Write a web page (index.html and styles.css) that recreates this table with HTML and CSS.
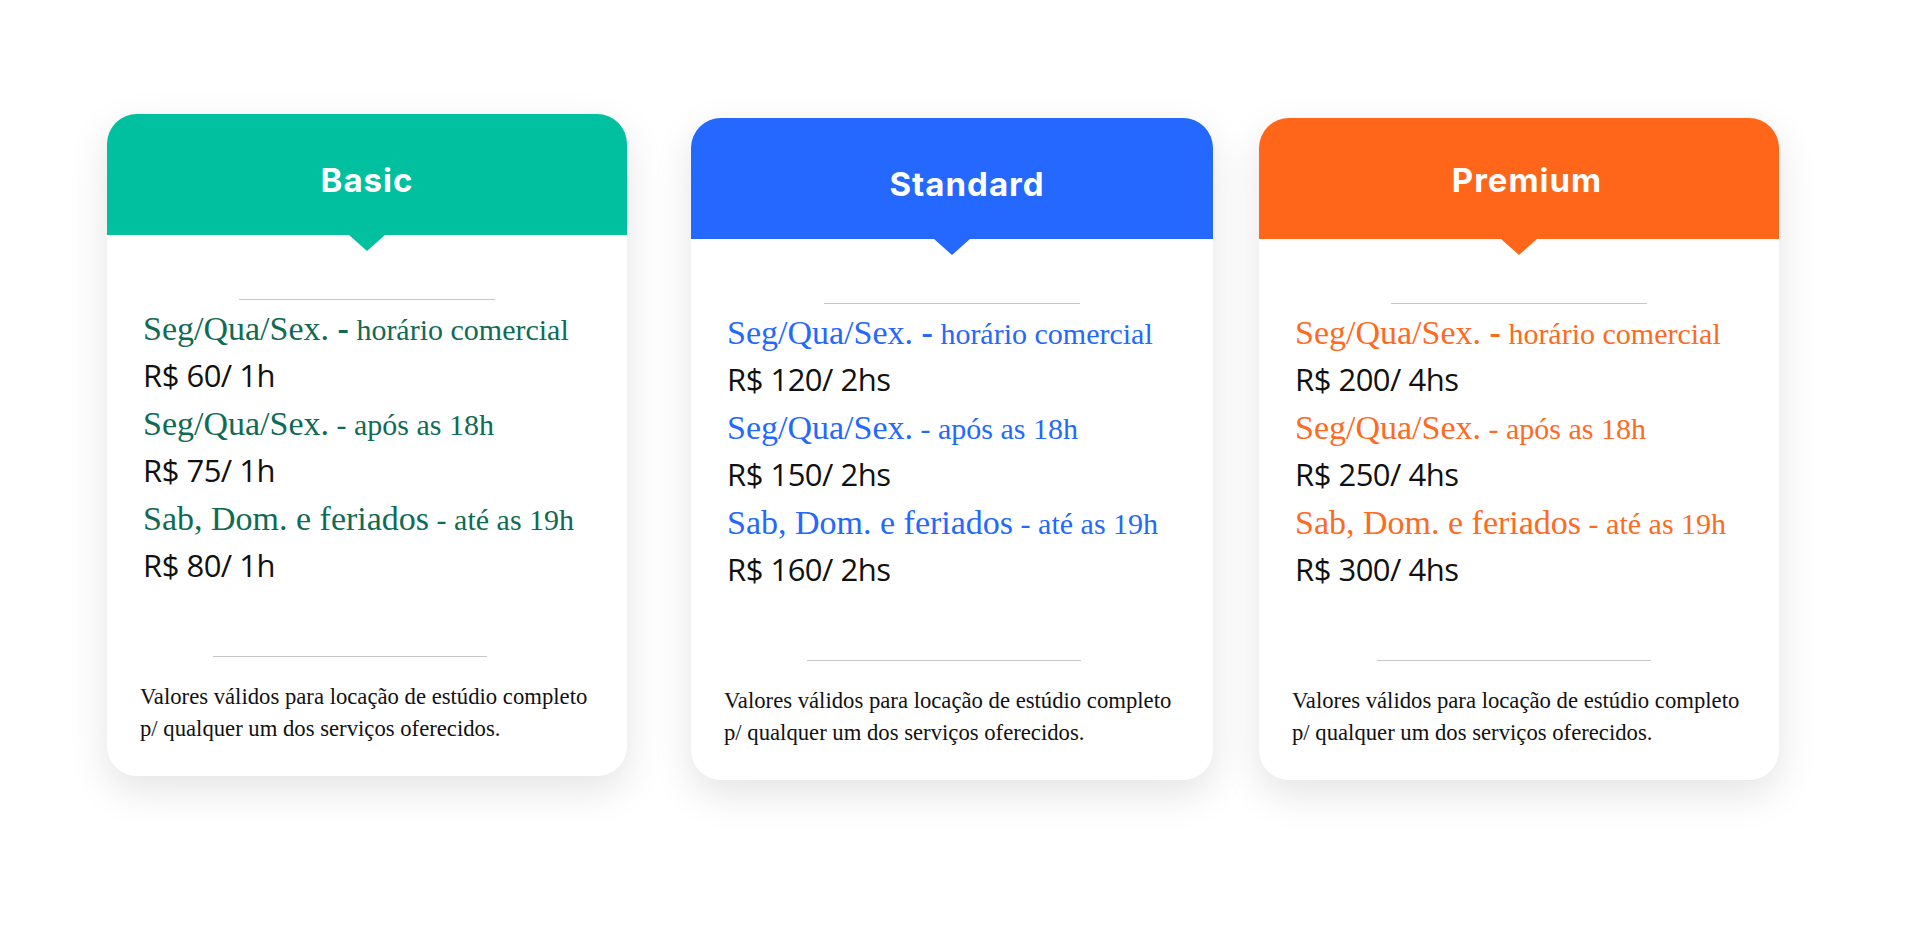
FILE: index.html
```html
<!DOCTYPE html>
<html lang="pt-BR">
<head>
<meta charset="utf-8">
<title>Planos de locação</title>
<link rel="stylesheet" href="styles.css">
</head>
<body>
<main class="pricing">
  <article class="card card--basic">
    <header class="card__head"><h2 class="card__title">Basic</h2></header>
    <div class="card__body">
      <hr class="rule rule--top">
      <ul class="rates">
        <li class="rates__when">Seg/Qua/Sex. <b class="rates__dash">-</b><span class="rates__time"> horário comercial</span></li>
        <li class="rates__price">R$ 60/ 1h</li>
        <li class="rates__when">Seg/Qua/Sex.<span class="rates__time"> - após as 18h</span></li>
        <li class="rates__price">R$ 75/ 1h</li>
        <li class="rates__when">Sab, Dom. e feriados<span class="rates__time"> - até as 19h</span></li>
        <li class="rates__price">R$ 80/ 1h</li>
      </ul>
      <hr class="rule rule--bottom">
      <p class="card__note">Valores válidos para locação de estúdio completo<br>p/ qualquer um dos serviços oferecidos.</p>
    </div>
  </article>

  <article class="card card--standard">
    <header class="card__head"><h2 class="card__title">Standard</h2></header>
    <div class="card__body">
      <hr class="rule rule--top">
      <ul class="rates">
        <li class="rates__when">Seg/Qua/Sex. <b class="rates__dash">-</b><span class="rates__time"> horário comercial</span></li>
        <li class="rates__price">R$ 120/ 2hs</li>
        <li class="rates__when">Seg/Qua/Sex.<span class="rates__time"> - após as 18h</span></li>
        <li class="rates__price">R$ 150/ 2hs</li>
        <li class="rates__when">Sab, Dom. e feriados<span class="rates__time"> - até as 19h</span></li>
        <li class="rates__price">R$ 160/ 2hs</li>
      </ul>
      <hr class="rule rule--bottom">
      <p class="card__note">Valores válidos para locação de estúdio completo<br>p/ qualquer um dos serviços oferecidos.</p>
    </div>
  </article>

  <article class="card card--premium">
    <header class="card__head"><h2 class="card__title">Premium</h2></header>
    <div class="card__body">
      <hr class="rule rule--top">
      <ul class="rates">
        <li class="rates__when">Seg/Qua/Sex. <b class="rates__dash">-</b><span class="rates__time"> horário comercial</span></li>
        <li class="rates__price">R$ 200/ 4hs</li>
        <li class="rates__when">Seg/Qua/Sex.<span class="rates__time"> - após as 18h</span></li>
        <li class="rates__price">R$ 250/ 4hs</li>
        <li class="rates__when">Sab, Dom. e feriados<span class="rates__time"> - até as 19h</span></li>
        <li class="rates__price">R$ 300/ 4hs</li>
      </ul>
      <hr class="rule rule--bottom">
      <p class="card__note">Valores válidos para locação de estúdio completo<br>p/ qualquer um dos serviços oferecidos.</p>
    </div>
  </article>
</main>
</body>
</html>
```

FILE: styles.css
```css
* {
  box-sizing: border-box;
}

html,
body {
  margin: 0;
  background: #ffffff;
}

.pricing {
  display: flex;
  align-items: flex-start;
  min-height: 950px;
  padding: 114px 0 120px 107px;
}

.card {
  width: 520px;
  height: 662px;
  background: #ffffff;
  border-radius: 30px;
  box-shadow: 0 14px 40px rgba(0, 0, 0, 0.11);
  display: flex;
  flex-direction: column;
}

.card--basic {
  --accent: #00c0a0;
  --ink: #0f6b55;
  --rule-x: 73px;
  margin-right: 64px;
}

.card--standard {
  --accent: #2468ff;
  --ink: #2468ff;
  --rule-x: 83px;
  width: 522px;
  margin-top: 4px;
  margin-right: 46px;
}

.card--premium {
  --accent: #ff6619;
  --ink: #ff6a1f;
  --rule-x: 85px;
  margin-top: 4px;
}

.card__head {
  position: relative;
  height: 121px;
  padding-top: 50px;
  background: var(--accent);
  border-radius: 30px 30px 0 0;
  text-align: center;
}

.card--standard .card__head {
  padding-left: 30px;
}

.card--premium .card__head {
  padding-top: 46px;
  padding-left: 16px;
}

.card__head::after {
  content: "";
  position: absolute;
  top: 100%;
  left: 50%;
  margin-left: -18.5px;
  border-style: solid;
  border-width: 16px 18.5px 0 18.5px;
  border-color: var(--accent) transparent transparent transparent;
}

.card__title {
  margin: 0;
  font: 700 33px/33px Inter, "Open Sans", sans-serif;
  letter-spacing: 1px;
  color: #ffffff;
}

.card__body {
  padding: 0 33px;
}

.rule {
  border: 0;
  height: 1px;
  background: #c6c6c6;
}

.rule--top {
  width: 256px;
  margin: 64px auto 5px;
}

.rule--bottom {
  width: 274px;
  margin: 67px 0 0 var(--rule-x);
}

.rates {
  list-style: none;
  margin: 0;
  padding: 0 0 0 3px;
  line-height: 47.4px;
  white-space: nowrap;
}

.rates__when {
  font-family: "Liberation Serif", "Times New Roman", serif;
  font-size: 34px;
  color: var(--ink);
}

.rates__dash {
  font-weight: 700;
}

.rates__time {
  font-size: 30px;
  line-height: 1;
}

.rates__price {
  font-family: "Open Sans", "Noto Sans", sans-serif;
  font-size: 31px;
  letter-spacing: -0.5px;
  color: #111111;
}

.card__note {
  margin: 24px 0 0;
  font-family: "Liberation Serif", "Times New Roman", serif;
  font-size: 22.7px;
  line-height: 32px;
  white-space: nowrap;
  color: #111111;
}
```
